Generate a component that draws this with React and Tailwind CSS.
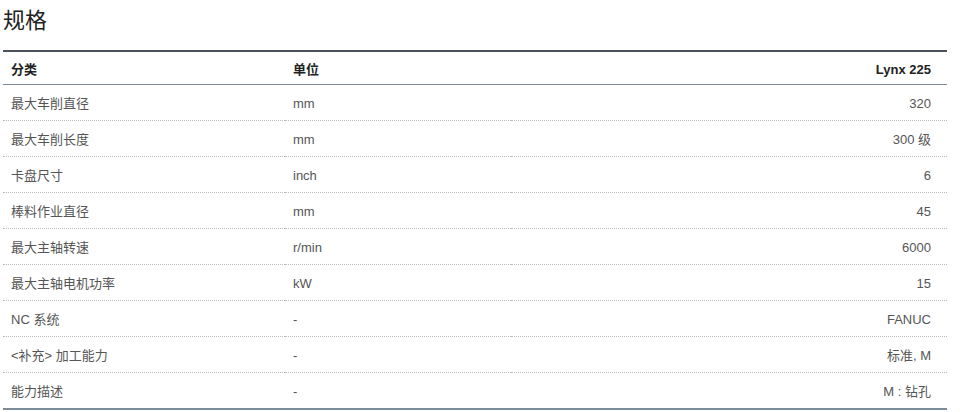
const rows = [
  ['最大车削直径', 'mm', '320'],
  ['最大车削长度', 'mm', '300 级'],
  ['卡盘尺寸', 'inch', '6'],
  ['棒料作业直径', 'mm', '45'],
  ['最大主轴转速', 'r/min', '6000'],
  ['最大主轴电机功率', 'kW', '15'],
  ['NC 系统', '-', 'FANUC'],
  ['<补充> 加工能力', '-', '标准, M'],
  ['能力描述', '-', 'M : 钻孔'],
];

export default function App() {
  return (
    <div className="w-[980px] h-[412px] bg-white pl-[3px] font-['Liberation_Sans','Noto_Sans_CJK_SC',sans-serif] overflow-hidden">
      <h2 className="text-[22px] leading-[40px] text-[#222] h-[50px] pt-[1px]">规格</h2>
      <table className="w-[944px] border-collapse text-[13px]">
        <thead>
          <tr className="border-t-2 border-t-[#4b5259] border-b border-b-[#7d8c9a] h-[33px]">
            <th className="w-[282px] text-left font-bold text-[#222] pl-2 pt-[3px]">分类</th>
            <th className="text-left font-bold text-[#222] pl-2 pt-[3px]">单位</th>
            <th className="text-right font-bold text-[#222] pr-4 pt-[3px]">Lynx 225</th>
          </tr>
        </thead>
        <tbody>
          {rows.map((r, i) => (
            <tr
              key={i}
              className={
                i === rows.length - 1
                  ? 'h-[37px] border-b-2 border-b-[#7d8c9a]'
                  : 'h-[36px] border-b border-dotted border-b-[#bbb]'
              }
            >
              <td className="pl-2 pt-[3px] text-[#555]">{r[0]}</td>
              <td className="pl-2 pt-[3px] text-[#555]">{r[1]}</td>
              <td className="pr-4 pt-[3px] text-right text-[#555]">{r[2]}</td>
            </tr>
          ))}
        </tbody>
      </table>
    </div>
  );
}
